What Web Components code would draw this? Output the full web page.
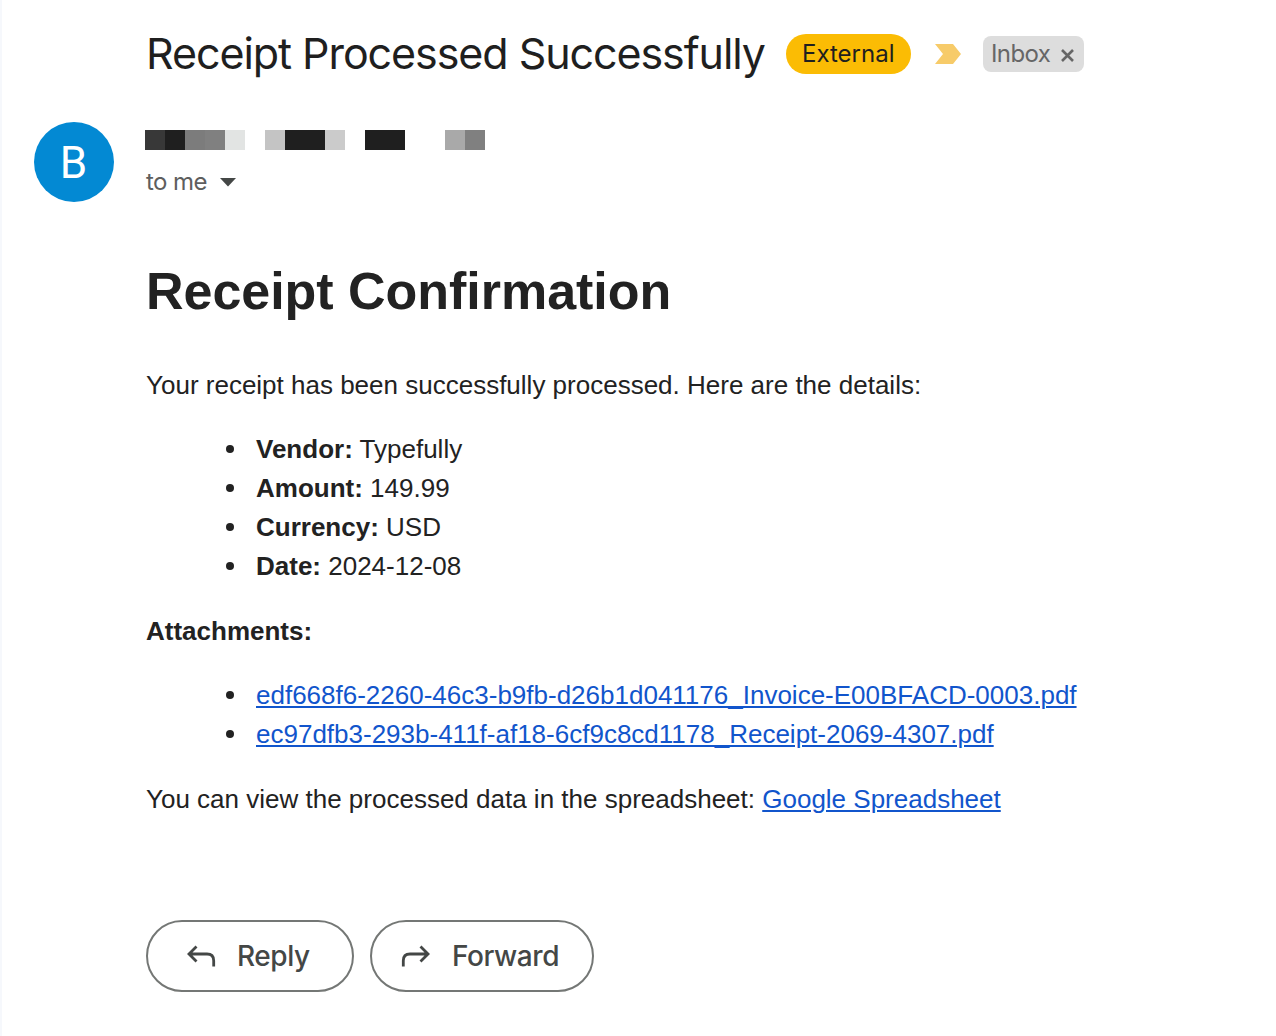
<!DOCTYPE html>
<html lang="en">
<head>
<meta charset="utf-8">
<title>Receipt Processed Successfully</title>
<style>
  body {
    margin: 0;
    background: #fff;
  }
</style>
</head>
<body>
<mail-message></mail-message>

<script>
class MailSubject extends HTMLElement {
  constructor() {
    super();
    this.attachShadow({ mode: "open" });
  }

  static get styles() {
    return /* css */`
      :host {
        display: flex;
        align-items: center;
        height: 44px;
        padding-left: 112px;
        color: #1f1f1f;
      }

      h2 {
        width: 640px;
        margin: -2px 0 0;
        font: 400 43px/44px Inter, sans-serif;
        letter-spacing: -1.07px;
        white-space: nowrap;
      }

      svg {
        display: block;
        width: 26px;
        height: 20px;
        margin: 0 22px 0 24px;
      }
    `;
  }

  connectedCallback() {
    this.shadowRoot.innerHTML = /* html */`
    <style>${MailSubject.styles}</style>
    <h2><slot></slot></h2>
    <mail-label kind="external">External</mail-label>
    <svg viewBox="0 0 26 20"><path d="M0 0h18l8 10-8 10H0l8-10z" fill="#f7cb69"/></svg>
    <mail-label kind="inbox" removable>Inbox</mail-label>`;
  }
}

class MailLabel extends HTMLElement {
  constructor() {
    super();
    this.attachShadow({ mode: "open" });
  }

  static get styles() {
    return /* css */`
      :host {
        display: flex;
        align-items: center;
        box-sizing: border-box;
        font-family: Inter, sans-serif;
        font-size: 24px;
        line-height: 36px;
        white-space: nowrap;
      }

      :host([kind="external"]) {
        width: 125px;
        height: 40px;
        padding-left: 16px;
        border-radius: 20px;
        background: #fbbc04;
        color: #1f1f1f;
      }

      :host([kind="inbox"]) {
        width: 101px;
        height: 36px;
        padding: 0 10px 0 8px;
        justify-content: space-between;
        border-radius: 8px;
        background: #ddd;
        color: #666;
        letter-spacing: -0.6px;
      }

      svg {
        width: 13px;
        height: 13px;
        margin-top: 3px;
      }
    `;
  }

  connectedCallback() {
    const close = `<svg viewBox="0 0 13 13"><path d="M1 1l11 11M12 1L1 12" stroke="#666" stroke-width="2.6"/></svg>`;
    this.shadowRoot.innerHTML = /* html */`
    <style>${MailLabel.styles}</style>
    <span><slot></slot></span>${this.hasAttribute("removable") ? close : ""}`;
  }
}

class MailSender extends HTMLElement {
  constructor() {
    super();
    this.attachShadow({ mode: "open" });
  }

  static get styles() {
    return /* css */`
      :host {
        display: flex;
        gap: 31px;
        height: 80px;
      }

      .avatar {
        width: 80px;
        height: 80px;
        border-radius: 50%;
        background: #0389d3;
        color: #fff;
        font: 400 44px/83px Roboto, sans-serif;
        text-align: center;
        text-indent: -1px;
      }

      .name {
        display: flex;
        height: 20px;
        margin-top: 8px;
      }

      .name i {
        width: 20px;
      }

      .to {
        display: flex;
        align-items: center;
        margin: 16px 0 0 1px;
        color: #5e5e5e;
        font: 400 24px/32px Inter, sans-serif;
        letter-spacing: -0.6px;
      }

      .to span {
        width: 74px;
      }

      svg {
        width: 16px;
        height: 9px;
        margin-top: 1px;
      }
    `;
  }

  connectedCallback() {
    // the sender's name is masked, one 20px block per entry
    const blocks = [
      "#383838", "#1f1f1f", "#7c7c7c", "#808080", "#e2e4e3", "",
      "#c4c4c4", "#1f1f1f", "#1f1f1f", "#cbcbcb", "",
      "#1f1f1f", "#1f1f1f", "", "", "#a9a9a9", "#808080"
    ];
    this.shadowRoot.innerHTML = /* html */`
    <style>${MailSender.styles}</style>
    <div class="avatar">${this.getAttribute("initial")}</div>
    <div>
      <div class="name">${blocks.map(color => `<i style="background:${color || "none"}"></i>`).join("")}</div>
      <div class="to"><span><slot></slot></span><svg viewBox="0 0 16 9"><path d="M0 0h16L8 8.5z" fill="#444746"/></svg></div>
    </div>`;
  }
}

class MailBody extends HTMLElement {
  constructor() {
    super();
    this.attachShadow({ mode: "open" });
  }

  static get styles() {
    return /* css */`
      :host {
        display: block;
        padding-left: 112px;
        color: #222;
        font: 400 26px/39px "Liberation Sans", Arial, sans-serif;
        white-space: nowrap;
      }

      h1 {
        margin: 0 0 36px;
        font-size: 52px;
        line-height: 78px;
        letter-spacing: -0.03px;
      }

      p {
        margin: 0 0 25px;
      }

      ul {
        margin: 0 0 26px;
        padding-left: 80px;
        list-style: none;
      }

      li {
        display: flex;
        align-items: center;
      }

      li::before {
        content: "";
        width: 8px;
        height: 8px;
        margin: -1px 22px 0 0;
        border-radius: 50%;
        background: #222;
      }

      li span {
        white-space: pre;
      }

      a {
        color: #1155cc;
        text-decoration-thickness: 2px;
        text-underline-offset: 2px;
      }
    `;
  }

  connectedCallback() {
    const details = [
      ["Vendor", "Typefully"],
      ["Amount", "149.99"],
      ["Currency", "USD"],
      ["Date", "2024-12-08"]
    ];
    const files = [
      "edf668f6-2260-46c3-b9fb-d26b1d041176_Invoice-E00BFACD-0003.pdf",
      "ec97dfb3-293b-411f-af18-6cf9c8cd1178_Receipt-2069-4307.pdf"
    ];
    this.shadowRoot.innerHTML = /* html */`
    <style>${MailBody.styles}</style>
    <h1>Receipt Confirmation</h1>
    <p>Your receipt has been successfully processed. Here are the details:</p>
    <ul>${details.map(([key, value]) => `<li><span><b>${key}:</b> ${value}</span></li>`).join("")}</ul>
    <p><b>Attachments:</b></p>
    <ul>${files.map(file => `<li><a href="#">${file}</a></li>`).join("")}</ul>
    <p>You can view the processed data in the spreadsheet: <a href="#">Google Spreadsheet</a></p>`;
  }
}

class MailAction extends HTMLElement {
  constructor() {
    super();
    this.attachShadow({ mode: "open" });
  }

  static get styles() {
    return /* css */`
      button {
        display: flex;
        align-items: center;
        box-sizing: border-box;
        width: 208px;
        height: 72px;
        padding: 0 0 0 39px;
        border: 2px solid #747775;
        border-radius: 36px;
        background: none;
        color: #444746;
        font: 500 28px/40px Inter, sans-serif;
        letter-spacing: -0.45px;
      }

      :host([type="forward"]) button {
        width: 224px;
        padding-left: 29px;
      }

      svg {
        width: 29px;
        height: 22px;
        margin-right: 21px;
      }

      :host([type="forward"]) svg {
        margin-right: 22px;
        transform: scaleX(-1);
      }
    `;
  }

  connectedCallback() {
    this.shadowRoot.innerHTML = /* html */`
    <style>${MailAction.styles}</style>
    <button>
      <svg viewBox="0 0 29 22" fill="none" stroke="#444746" stroke-width="2.8">
        <path d="M9.5 1.5L2 9l7.500 7.500M2 9h18q6.700 0 6.700 6.700V21.500"/>
      </svg>
      <slot></slot>
    </button>`;
  }
}

class MailMessage extends HTMLElement {
  constructor() {
    super();
    this.attachShadow({ mode: "open" });
  }

  static get styles() {
    return /* css */`
      :host {
        display: block;
        box-sizing: border-box;
        height: 1036px;
        padding: 32px 0 0 32px;
        border-left: 2px solid #f6f8fc;
        overflow: hidden;
      }

      mail-sender {
        margin: 46px 0 50px;
      }

      .actions {
        display: flex;
        gap: 16px;
        padding: 76px 0 0 112px;
      }
    `;
  }

  connectedCallback() {
    this.shadowRoot.innerHTML = /* html */`
    <style>${MailMessage.styles}</style>
    <mail-subject>Receipt Processed Successfully</mail-subject>
    <mail-sender initial="B">to me</mail-sender>
    <mail-body></mail-body>
    <div class="actions">
      <mail-action type="reply">Reply</mail-action>
      <mail-action type="forward">Forward</mail-action>
    </div>`;
  }
}

customElements.define("mail-subject", MailSubject);
customElements.define("mail-label", MailLabel);
customElements.define("mail-sender", MailSender);
customElements.define("mail-body", MailBody);
customElements.define("mail-action", MailAction);
customElements.define("mail-message", MailMessage);
</script>
</body>
</html>
